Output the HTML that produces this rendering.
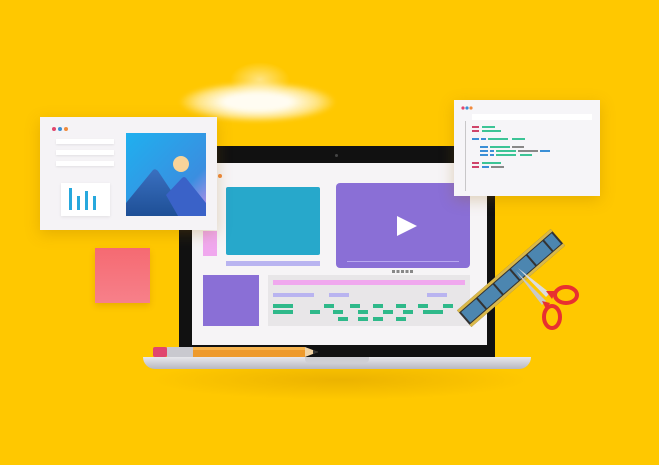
<!DOCTYPE html>
<html><head><meta charset="utf-8"><style>
*{margin:0;padding:0;box-sizing:border-box}
body{width:659px;height:465px;overflow:hidden;background:#FFC800;position:relative;font-family:"Liberation Sans",sans-serif}
.a{position:absolute}
</style></head><body>
<div class="a" style="left:150px;top:360px;width:380px;height:40px;background:radial-gradient(ellipse at center,rgba(200,140,0,.35),rgba(255,200,0,0) 70%)"></div>
<!-- cloud -->
<div class="a" style="left:180px;top:82px;width:155px;height:40px;border-radius:50%;background:radial-gradient(ellipse at center,rgba(255,255,255,.95) 30%,rgba(255,255,255,.5) 55%,rgba(255,255,255,0) 72%);filter:blur(2px)"></div>
<div class="a" style="left:230px;top:62px;width:60px;height:35px;border-radius:50%;background:radial-gradient(ellipse at center,rgba(255,255,255,.5),rgba(255,255,255,0) 70%)"></div>
<!-- laptop -->
<div class="a" style="left:179px;top:146px;width:316px;height:212px;background:#111;border-radius:6px 6px 0 0"></div>
<div class="a" style="left:335px;top:154px;width:3px;height:3px;border-radius:50%;background:#444"></div>
<div class="a" style="left:192px;top:163px;width:295px;height:182px;background:#f6f4f6"></div>
<div class="a" style="left:143px;top:357px;width:388px;height:12px;background:linear-gradient(#e8e8ec,#b8b8c0);border-radius:0 0 20px 20px"></div>
<div class="a" style="left:305px;top:357px;width:64px;height:6px;background:#cfcfd4;border-radius:0 0 4px 4px"></div>
<!-- screen content -->
<div class="a" style="left:218px;top:174px;width:4px;height:4px;border-radius:50%;background:#f08a3c"></div>
<div class="a" style="left:226px;top:187px;width:94px;height:68px;background:#27a8cb;border-radius:2px"></div>
<div class="a" style="left:226px;top:261px;width:94px;height:5px;background:#b9b4f0"></div>
<div class="a" style="left:203px;top:231px;width:14px;height:25px;background:#f0a8ee"></div>
<div class="a" style="left:336px;top:183px;width:134px;height:85px;background:#8a6fd6;border-radius:4px"></div>
<div class="a" style="left:397px;top:216px;width:0;height:0;border-left:20px solid #fff;border-top:10px solid transparent;border-bottom:10px solid transparent"></div>
<div class="a" style="left:347px;top:261px;width:112px;height:1px;background:#b9a8f0"></div>
<div class="a" style="left:392px;top:270px;width:22px;height:3px;background:repeating-linear-gradient(90deg,#888 0 3px,transparent 3px 4.5px)"></div>
<div class="a" style="left:203px;top:275px;width:56px;height:51px;background:#8a6fd6"></div>
<div class="a" style="left:268px;top:275px;width:202px;height:51px;background:#e8e6e8"></div>
<div class="a" style="left:273px;top:280px;width:192px;height:5px;background:#f0a8ee"></div>
<div class="a" style="left:273px;top:293px;width:41px;height:4px;background:#b9b4f0"></div>
<div class="a" style="left:329px;top:293px;width:20px;height:4px;background:#b9b4f0"></div>
<div class="a" style="left:427px;top:293px;width:20px;height:4px;background:#b9b4f0"></div>
<svg class="a" style="left:268px;top:300px" width="202" height="26">
<g fill="#2fb98a">
<rect x="5" y="4" width="20" height="4"/><rect x="5" y="10" width="20" height="4"/>
<rect x="42" y="10" width="10" height="4"/><rect x="56" y="4" width="10" height="4"/>
<rect x="65" y="10" width="10" height="4"/><rect x="70" y="17" width="10" height="4"/>
<rect x="82" y="4" width="10" height="4"/><rect x="90" y="10" width="10" height="4"/>
<rect x="90" y="17" width="10" height="4"/><rect x="105" y="4" width="10" height="4"/>
<rect x="105" y="17" width="10" height="4"/><rect x="115" y="10" width="10" height="4"/>
<rect x="128" y="4" width="10" height="4"/><rect x="128" y="17" width="10" height="4"/>
<rect x="135" y="10" width="10" height="4"/><rect x="150" y="4" width="10" height="4"/>
<rect x="155" y="10" width="20" height="4"/><rect x="175" y="4" width="10" height="4"/>
</g></svg>
<!-- pencil -->
<svg class="a" style="left:150px;top:344px" width="170" height="16">
<rect x="3" y="3" width="14" height="10" rx="2" fill="#e0466e"/>
<rect x="17" y="3" width="26" height="10" fill="#c9c9cf"/>
<rect x="43" y="3" width="112" height="10" fill="#ee9a2c"/>
<rect x="43" y="3" width="112" height="3" fill="#f6b34e"/>
<polygon points="155,3 168,8 155,13" fill="#f1d3a5"/>
<polygon points="163,6 168,8 163,10" fill="#333"/>
</svg>
<!-- left card -->
<div class="a" style="left:40px;top:117px;width:177px;height:113px;background:#f5f3f6;box-shadow:0 4px 14px rgba(150,100,0,.25)"></div>
<div class="a" style="left:52px;top:127px;width:4px;height:4px;border-radius:50%;background:#e0466e"></div>
<div class="a" style="left:58px;top:127px;width:4px;height:4px;border-radius:50%;background:#3a8fd6"></div>
<div class="a" style="left:64px;top:127px;width:4px;height:4px;border-radius:50%;background:#f08a3c"></div>
<div class="a" style="left:56px;top:139px;width:58px;height:5px;background:#fff;box-shadow:0 1px 2px rgba(0,0,0,.08)"></div>
<div class="a" style="left:56px;top:150px;width:58px;height:5px;background:#fff;box-shadow:0 1px 2px rgba(0,0,0,.08)"></div>
<div class="a" style="left:56px;top:161px;width:58px;height:5px;background:#fff;box-shadow:0 1px 2px rgba(0,0,0,.08)"></div>
<div class="a" style="left:61px;top:183px;width:49px;height:33px;background:#fff;box-shadow:0 1px 3px rgba(0,0,0,.08)"></div>
<svg class="a" style="left:61px;top:183px" width="49" height="33"><g fill="#27a8dd"><rect x="8" y="5" width="3" height="22"/><rect x="16" y="13" width="3" height="14"/><rect x="24" y="8" width="3" height="19"/><rect x="32" y="13" width="3" height="14"/></g></svg>
<svg class="a" style="left:126px;top:133px" width="80" height="83">
<defs><linearGradient id="sky" x1="0" y1="0" x2="1" y2="1"><stop offset="0" stop-color="#1fb0ef"/><stop offset=".7" stop-color="#3a8ee0"/><stop offset="1" stop-color="#c88ee8"/></linearGradient>
<linearGradient id="m" x1="0" y1="0" x2="0" y2="1"><stop offset="0" stop-color="#3a70c0"/><stop offset="1" stop-color="#1e4f96"/></linearGradient></defs>
<rect width="80" height="83" fill="url(#sky)"/>
<circle cx="55" cy="31" r="8" fill="#f7d49a"/>
<path d="M0 83 L0 70 L27 37 Q29 35 32 38 L62 83Z" fill="url(#m)"/>
<path d="M40 62 L56 45 Q58 43 60 45 L80 70 L80 83 L52 83Z" fill="#3a62c8"/>
</svg>
<!-- sticky -->
<div class="a" style="left:95px;top:248px;width:55px;height:55px;background:linear-gradient(#f56a72,#f7808a);box-shadow:0 3px 6px rgba(150,80,0,.2)"></div>
<!-- right card -->
<div class="a" style="left:454px;top:100px;width:146px;height:96px;background:#f6f5f8;box-shadow:0 4px 14px rgba(150,100,0,.25)"></div>
<svg class="a" style="left:454px;top:100px" width="146" height="96">
<circle cx="9" cy="8" r="1.6" fill="#e0466e"/><circle cx="13" cy="8" r="1.6" fill="#3a8fd6"/><circle cx="17" cy="8" r="1.6" fill="#f08a3c"/>
<rect x="18" y="14" width="120" height="6" fill="#fff"/>
<g fill="#999"><rect x="11" y="21" width="1" height="70" opacity=".5"/></g>
<g fill="#d0446a"><rect x="18" y="26" width="7" height="2"/><rect x="18" y="30" width="7" height="2"/><rect x="18" y="62" width="7" height="2"/><rect x="18" y="66" width="7" height="2"/></g>
<g fill="#3cc496"><rect x="28" y="26" width="13" height="2"/><rect x="28" y="30" width="19" height="2"/><rect x="34" y="38" width="20" height="2"/><rect x="58" y="38" width="13" height="2"/><rect x="36" y="46" width="20" height="2"/><rect x="42" y="50" width="20" height="2"/><rect x="42" y="54" width="20" height="2"/><rect x="66" y="54" width="12" height="2"/><rect x="28" y="62" width="19" height="2"/></g>
<g fill="#3a8fd6"><rect x="18" y="38" width="7" height="2"/><rect x="27" y="38" width="5" height="2"/><rect x="26" y="46" width="8" height="2"/><rect x="26" y="50" width="8" height="2"/><rect x="36" y="50" width="4" height="2"/><rect x="26" y="54" width="8" height="2"/><rect x="36" y="54" width="4" height="2"/><rect x="28" y="66" width="7" height="2"/><rect x="86" y="50" width="10" height="2"/></g>
<g fill="#888"><rect x="58" y="46" width="12" height="2"/><rect x="64" y="50" width="20" height="2"/><rect x="37" y="66" width="13" height="2"/></g>
</svg>
<!-- film strip & scissors -->
<svg class="a" style="left:450px;top:225px" width="140" height="115">
<g transform="translate(61,53) rotate(-41)">
<rect x="-62" y="-11" width="124" height="22" fill="#333"/>
<rect x="-62" y="-11" width="124" height="3" fill="#d9b84a"/>
<rect x="-62" y="8" width="124" height="3" fill="#d9b84a"/>
<g fill="#4c86b0"><rect x="-60" y="-7" width="20" height="14"/><rect x="-38" y="-7" width="20" height="14"/><rect x="-16" y="-7" width="20" height="14"/><rect x="6" y="-7" width="20" height="14"/><rect x="28" y="-7" width="20" height="14"/><rect x="50" y="-7" width="10" height="14"/></g>
</g>
<path d="M68 43 L100 68 L96 72Z" fill="#ddd"/>
<path d="M66 46 L96 76 L92 80Z" fill="#c8c8c8"/>
<ellipse cx="116" cy="70" rx="11" ry="8" fill="none" stroke="#e83030" stroke-width="4"/>
<ellipse cx="102" cy="92" rx="8" ry="11" fill="none" stroke="#e83030" stroke-width="4"/>
<path d="M96 66 L106 66 L102 74Z" fill="#e83030"/>
<path d="M92 76 L100 78 L96 84Z" fill="#e83030"/>
</svg>
</body></html>
